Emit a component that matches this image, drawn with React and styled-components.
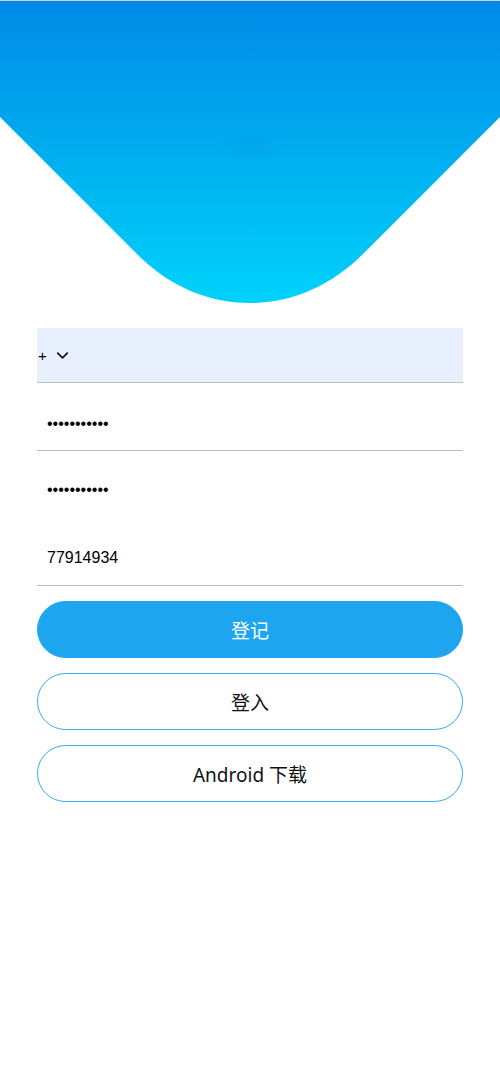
import React from 'react';
import styled, { createGlobalStyle } from 'styled-components';
import { ChevronDown } from 'lucide-react';

const GlobalStyle = createGlobalStyle`
  html, body {
    margin: 0;
    padding: 0;
    background: #ffffff;
  }
  body {
    font-family: "Liberation Sans", Arial, "Noto Sans CJK SC", sans-serif;
  }
`;

const Page = styled.div`
  width: 500px;
  min-height: 1080px;
  border-top: 1px solid #d6d6d6;
  box-sizing: border-box;
`;

const Header = styled.div`
  height: 304px;
  line-height: 0;
`;

const Form = styled.div`
  display: flex;
  flex-direction: column;
  padding: 23px 37px 0 37px;
`;

const Field = styled.div`
  display: flex;
  align-items: center;
  box-sizing: border-box;
  height: ${(p) => p.$h}px;
  padding: ${(p) => p.$pt || 0}px 0 0 ${(p) => p.$pl || 10}px;
  background: ${(p) => (p.$fill ? '#e8f0fe' : 'transparent')};
  border-bottom: 1px solid ${(p) => (p.$line ? '#bdbdbd' : 'transparent')};
  font-size: 16px;
  color: #000;
`;

const Plus = styled.span`
  font-size: 15px;
  margin-right: 6px;
`;

const Dots = styled.span`
  font-size: 16px;
  letter-spacing: 0;
`;

const Buttons = styled.div`
  display: flex;
  flex-direction: column;
  gap: 15px;
  margin-top: 15px;
`;

const Button = styled.button`
  height: 57px;
  width: 100%;
  border-radius: 29px;
  border: 1px solid ${(p) => (p.$primary ? '#1da5ef' : '#3aabf0')};
  background: ${(p) => (p.$primary ? '#1da5ef' : '#ffffff')};
  color: ${(p) => (p.$primary ? '#ffffff' : '#111111')};
  font-family: "Noto Sans", "Noto Sans CJK SC", sans-serif;
  font-size: 19px;
  cursor: pointer;
  padding: 0;
`;

const Wave = () => (
  <svg width="500" height="304" viewBox="0 0 500 304">
    <defs>
      <linearGradient id="hg" x1="0" y1="0" x2="0" y2="1">
        <stop offset="0" stopColor="#008ae8" />
        <stop offset="0.45" stopColor="#00aaee" />
        <stop offset="1" stopColor="#00d2fb" />
      </linearGradient>
      <filter id="bl" x="-50%" y="-50%" width="200%" height="200%">
        <feGaussianBlur stdDeviation="8" />
      </filter>
    </defs>
    <path
      d="M0 0 H500 V116 L362 254 C330 285 292 302 250 302 C208 302 170 285 140 256 L0 116 Z"
      fill="url(#hg)"
    />
    <ellipse cx="250" cy="143" rx="22" ry="7" fill="#0096e4" opacity="0.35" filter="url(#bl)" />
  </svg>
);

export default function App() {
  return (
    <>
      <GlobalStyle />
      <Page>
        <Header>
          <Wave />
        </Header>
        <Form>
          <Field $h={55} $fill $line $pl={1}>
            <Plus>+</Plus>
            <ChevronDown size={19} strokeWidth={2.2} color="#111" />
          </Field>
          <Field $h={68} $line $pt={14}>
            <Dots>•••••••••••</Dots>
          </Field>
          <Field $h={67} $pt={12}>
            <Dots>•••••••••••</Dots>
          </Field>
          <Field $h={68} $line $pt={12}>
            77914934
          </Field>
          <Buttons>
            <Button $primary>登记</Button>
            <Button>登入</Button>
            <Button>Android 下载</Button>
          </Buttons>
        </Form>
      </Page>
    </>
  );
}
